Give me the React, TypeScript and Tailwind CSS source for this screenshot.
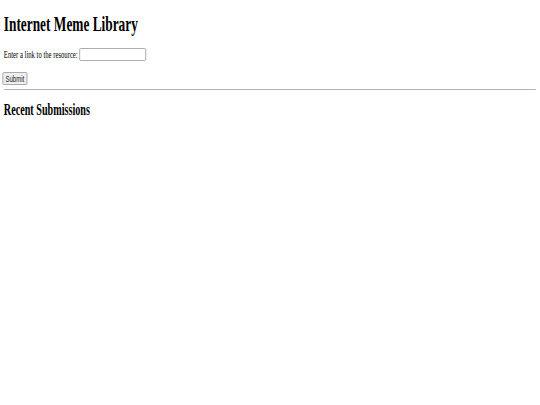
import React from "react";

const App: React.FC = () => {
    return (
        <div className="min-h-screen w-full overflow-hidden bg-white">
            <div className="w-[850px] origin-left scale-x-[0.635] px-[6px] font-['Liberation_Serif',serif] text-black">
                <h1 className="mt-[12px] text-[21px] leading-[24px] font-bold">
                    Internet Meme Library
                </h1>
                <div className="mt-[12px] flex h-[13px] items-center gap-[3px]">
                    <label className="text-[10.5px] leading-[13px]">
                        Enter a link to the resource:
                    </label>
                    <input
                        type="text"
                        className="h-[13px] w-[105px] rounded-[2px] border border-[#9a9a9a] bg-white outline-none"
                    />
                </div>
                <button
                    type="button"
                    className="-ml-[2px] mt-[11px] flex h-[13px] items-center rounded-[2px] border border-[#9a9a9a] bg-[#efefef] px-[3.5px] font-['Liberation_Sans',Arial,sans-serif] text-[9.5px] leading-none text-[#222]"
                >
                    Submit
                </button>
                <hr className="mt-[4px] border-t border-[#b4b4b4]" />
                <h2 className="mt-[11px] text-[16px] leading-[18px] font-bold">
                    Recent Submissions
                </h2>
            </div>
        </div>
    );
};

export default App;
